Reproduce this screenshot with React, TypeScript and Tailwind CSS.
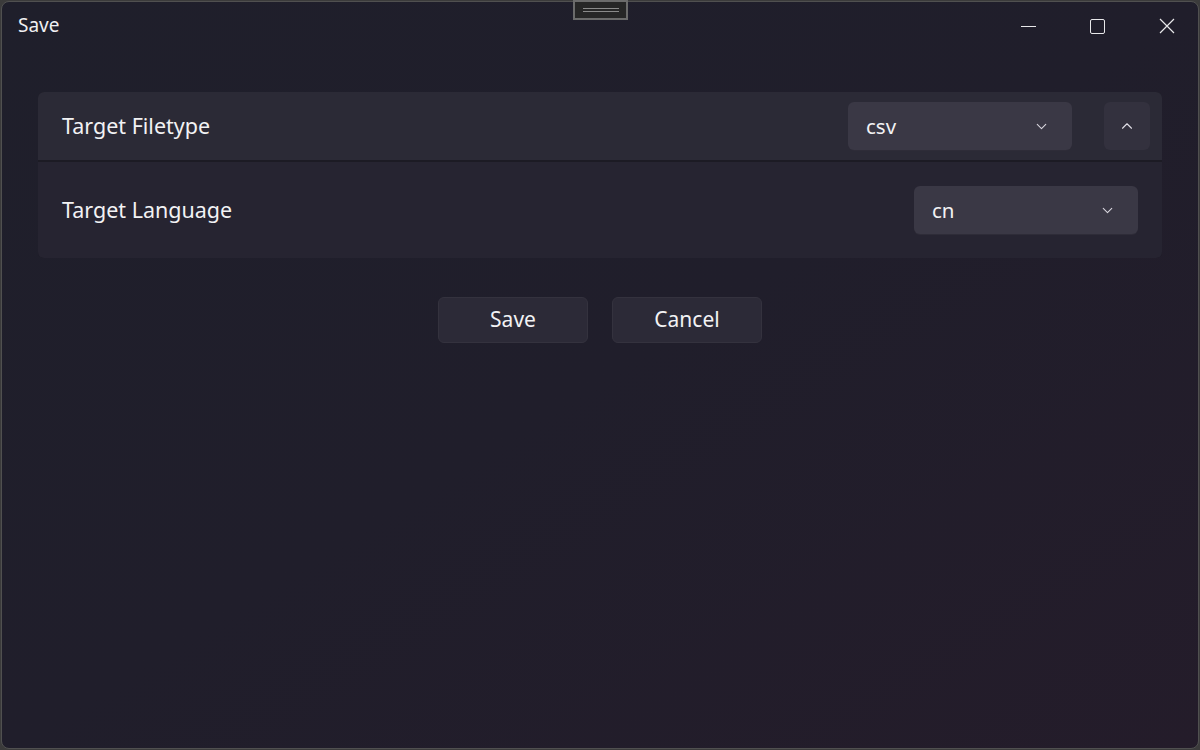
import { ChevronDown, ChevronUp } from "lucide-react";

function Dropdown({ value }: { value: string }) {
  return (
    <div className="flex h-[48px] w-[224px] items-center justify-between rounded-md bg-[#3a3845] pl-[18px] pr-[22px] shadow-[0_1px_0_#2e2c38]">
      <span className="text-[20.5px] text-[#f2f2f4]">{value}</span>
      <ChevronDown size={17} strokeWidth={1.5} className="text-[#d8d6de]" />
    </div>
  );
}

function App() {
  return (
    <div
      className="h-[750px] w-[1200px] bg-[#3b3b3b] p-px"
      style={{ fontFamily: '"Noto Sans", "Open Sans", sans-serif' }}
    >
      <div className="relative flex h-full flex-col rounded-lg border border-[#505050] bg-gradient-to-br from-[#1f1f2b] via-[#201e2b] to-[#241c2a]">
        {/* snap handle */}
        <div className="absolute left-[571px] top-[-2px] flex h-[20px] w-[55px] flex-col items-center justify-center gap-[2px] border-2 border-[#6b6b6b] bg-[#262626]">
          <div className="h-px w-[36px] bg-[#8a8a8a]" />
          <div className="h-px w-[36px] bg-[#8a8a8a]" />
        </div>

        {/* title bar */}
        <div className="flex h-[48px] items-center justify-between pl-[16px]">
          <span className="-mt-[2px] text-[19px] text-[#f0f0f2]">Save</span>
          <div className="-mr-[3px] flex h-full items-center">
            <div className="flex h-full w-[69px] items-center justify-center">
              <div className="h-px w-[15px] bg-[#e8e8ea]" />
            </div>
            <div className="flex h-full w-[69px] items-center justify-center">
              <div className="h-[15px] w-[15px] rounded-[2px] border border-[#e8e8ea]" />
            </div>
            <div className="flex h-full w-[69px] items-center justify-center">
              <svg width="16" height="16" viewBox="0 0 16 16" fill="none" stroke="#e8e8ea" strokeWidth="1.2">
                <path d="M1 1 L15 15 M15 1 L1 15" />
              </svg>
            </div>
          </div>
        </div>

        {/* content */}
        <div className="flex flex-col px-9 pt-[42px]">
          <div className="flex flex-col overflow-hidden rounded-md bg-[#1c1b24]">
            <div className="flex h-[68px] items-center justify-between bg-[#2b2a36] pl-6 pr-[12px]">
              <span className="text-[21.5px] text-[#f2f2f4]">Target Filetype</span>
              <div className="flex items-center gap-8">
                <Dropdown value="csv" />
                <div className="flex h-[48px] w-[46px] items-center justify-center rounded-md bg-[#33313e]">
                  <ChevronUp size={18} strokeWidth={1.5} className="text-[#e0dee6]" />
                </div>
              </div>
            </div>
            <div className="mt-[2px] flex h-[96px] items-center justify-between bg-[#262431] pl-6 pr-[24px]">
              <span className="text-[21.5px] text-[#f2f2f4]">Target Language</span>
              <Dropdown value="cn" />
            </div>
          </div>

          <div className="mt-[39px] flex justify-center gap-6">
            <button className="h-[46px] w-[150px] rounded-md border border-[#34323e] bg-[#2c2a37] text-[21px] text-[#f2f2f4]">
              Save
            </button>
            <button className="h-[46px] w-[150px] rounded-md border border-[#34323e] bg-[#2c2a37] text-[21px] text-[#f2f2f4]">
              Cancel
            </button>
          </div>
        </div>
      </div>
    </div>
  );
}

export default App;
